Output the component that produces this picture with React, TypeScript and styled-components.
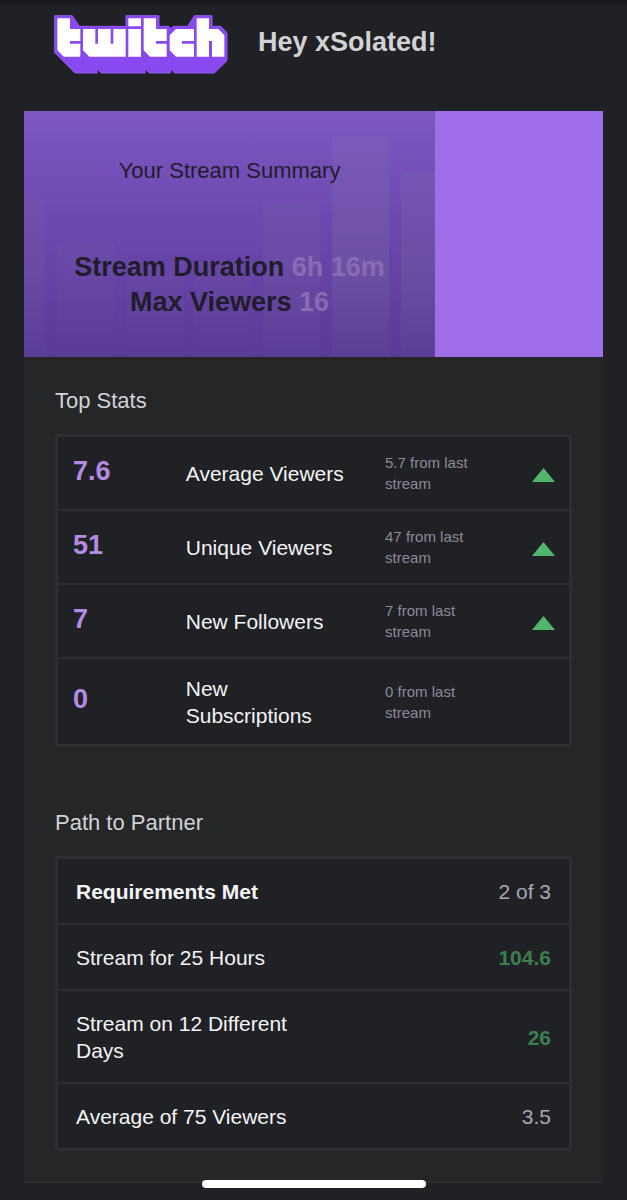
import React from "react";
import styled, { createGlobalStyle } from "styled-components";

const colors = {
  page: "#202125",
  card: "#252628",
  line: "#2e2f32",
  heading: "#d2d2d4",
  text: "#f4f4f6",
  muted: "#8c8a99",
  soft: "#a9a7b6",
  accent: "#b48be4",
  up: "#52b66c",
  met: "#3c7f4e",
};

const GlobalStyle = createGlobalStyle`
  *, *::before, *::after { box-sizing: border-box; }
  html, body { margin: 0; background: ${colors.page}; }
  body {
    color: ${colors.text};
    font-family: "Liberation Sans", Arial, Helvetica, sans-serif;
    font-size: 21px;
    line-height: 27px;
  }
`;

const Page = styled.div`
  min-height: 100vh;
  padding: 0 24px 16px;
  background: linear-gradient(#17181a, ${colors.page} 6px);
`;

const Header = styled.header`
  display: flex;
  align-items: center;
  gap: 30px;
  padding: 15px 30px 37px;
`;

const LogoMark = styled.svg`
  display: block;
  flex: none;
  width: 174px;
  height: 59px;
`;

const Greeting = styled.h1`
  margin: 0;
  padding-bottom: 6px;
  color: ${colors.heading};
  font-size: 27px;
  line-height: 32px;
`;

const Card = styled.main`
  background: ${colors.card};
  border-bottom: 2px solid ${colors.line};
`;

const Hero = styled.section`
  display: flex;
  background: #9f6ee8;
`;

const Summary = styled.div`
  position: relative;
  flex: 0 0 71%;
  padding: 46px 12px 37px;
  background: linear-gradient(#7e57c3, #6a47ac 50%, #593b96);
  color: #211c2b;
  text-align: center;
`;

const HeroBars = styled.svg`
  position: absolute;
  inset: 0;
  width: 100%;
  height: 100%;
`;

const SummaryTitle = styled.h2`
  position: relative;
  margin: 0 0 65px;
  font-size: 22px;
  font-weight: 400;
  line-height: 28px;
`;

const SummaryLine = styled.p`
  position: relative;
  margin: 0;
  font-size: 27px;
  font-weight: 700;
  line-height: 35px;
`;

const SummaryValue = styled.span`
  color: #876cb4;
`;

const Sections = styled.div`
  display: flex;
  flex-direction: column;
  gap: 62px;
  padding: 30px 31px;
`;

const SectionTitle = styled.h2`
  margin: 0 0 19px;
  color: ${colors.heading};
  font-size: 22px;
  font-weight: 400;
  line-height: 28px;
`;

const Panel = styled.div`
  border: 3px solid ${colors.line};
  border-radius: 3px;
  background: ${colors.page};
`;

const Table = styled.table`
  width: 100%;
  table-layout: fixed;
  border-collapse: separate;
  border-spacing: 0;
`;

const Column = styled.col<{ $width: string }>`
  width: ${(p) => p.$width};
`;

const Row = styled.tr`
  &:not(:last-child) > * {
    border-bottom: 2px solid ${colors.line};
  }
`;

const StatValue = styled.td`
  padding: 16px 0 21px 15px;
  color: ${colors.accent};
  font-size: 27px;
  font-weight: 700;
  line-height: 32px;
`;

const StatLabel = styled.th`
  padding: 16px 36px 15px 0;
  font-weight: 400;
  text-align: left;
`;

const StatChange = styled.td`
  padding: 15px 40px 15px 0;
  color: ${colors.muted};
  font-size: 15px;
  line-height: 21px;
`;

const StatTrend = styled.td`
  padding: 4px 14px 0 0;
  line-height: 0;
  text-align: right;
`;

const PathLabel = styled.th<{ $strong?: boolean }>`
  padding: 19px 0 18px 18px;
  font-weight: ${(p) => (p.$strong ? 700 : 400)};
  text-align: left;
`;

const PathValue = styled.td<{ $met?: boolean }>`
  padding: 19px 18px 18px 0;
  color: ${(p) => (p.$met ? colors.met : colors.soft)};
  font-weight: ${(p) => (p.$met ? 700 : 400)};
  text-align: right;
`;

const HomeIndicator = styled.div`
  position: fixed;
  bottom: 12px;
  left: 50%;
  width: 224px;
  height: 8px;
  margin-left: -112px;
  border-radius: 4px;
  background: #fff;
`;

const stats = [
  { value: "7.6", label: "Average Viewers", change: "5.7 from last stream", up: true },
  { value: "51", label: "Unique Viewers", change: "47 from last stream", up: true },
  { value: "7", label: "New Followers", change: "7 from last stream", up: true },
  { value: "0", label: "New Subscriptions", change: "0 from last stream", up: false },
];

const requirements = [
  { label: "Requirements Met", value: "2 of 3", strong: true, met: false },
  { label: "Stream for 25 Hours", value: "104.6", strong: false, met: true },
  { label: "Stream on 12 Different Days", value: "26", strong: false, met: true },
  { label: "Average of 75 Viewers", value: "3.5", strong: false, met: false },
];

const bars = [
  { x: 0, y: 87, width: 21, opacity: 0.6 },
  { x: 33, y: 131, width: 58, opacity: 0.35 },
  { x: 102, y: 150, width: 58, opacity: 0.3 },
  { x: 170, y: 150, width: 58, opacity: 0.3 },
  { x: 239, y: 92, width: 57, opacity: 0.6 },
  { x: 308, y: 25, width: 57, opacity: 1 },
  { x: 377, y: 61, width: 34, opacity: 0.8 },
];

function Logo() {
  return (
    <LogoMark viewBox="42 46 522 177" role="img" aria-label="Twitch">
      <path
        fill="#8849f0"
        stroke="#9257f2"
        strokeWidth="3"
        d="M44 48H97L118 80H258V48H357V80H386L393 87L400 80H443L463 48H516V80H542L561 99V183L523 220H404L391 207V220H328L315 207V220H184L171 207V220H105L44 159Z"
      />
      <path
        fill="#fff"
        d="M52 56H90V88H121V124H90V132H121V171H71L52 152Z M129 88H166V132H174V88H212V132H220V88H257V171H148L129 152Z M265 56H303V80H265Z M265 88H303V171H265Z M311 56H348V88H380V124H348V132H380V171H330L311 152Z M408 88H462V124H426V132H462V171H408L389 152V107Z M470 56H507V88H535L553 107V171H516V124H507V171H470Z"
      />
    </LogoMark>
  );
}

export default function App() {
  return (
    <>
      <GlobalStyle />
      <Page>
        <Header>
          <Logo />
          <Greeting>Hey xSolated!</Greeting>
        </Header>
        <Card>
          <Hero>
            <Summary>
              <HeroBars viewBox="0 0 411 246" preserveAspectRatio="none" aria-hidden="true">
                <defs>
                  <linearGradient id="barFade" gradientUnits="userSpaceOnUse" x1="0" y1="20" x2="0" y2="246">
                    <stop offset="0" stopColor="#8a8a9a" stopOpacity="0.12" />
                    <stop offset="0.6" stopColor="#8a8a9a" stopOpacity="0.18" />
                    <stop offset="1" stopColor="#8a8a9a" stopOpacity="0.04" />
                  </linearGradient>
                </defs>
                {bars.map((bar) => (
                  <rect
                    key={bar.x}
                    x={bar.x}
                    y={bar.y}
                    width={bar.width}
                    height={246 - bar.y}
                    fill="url(#barFade)"
                    opacity={bar.opacity}
                  />
                ))}
              </HeroBars>
              <SummaryTitle>Your Stream Summary</SummaryTitle>
              <SummaryLine>
                Stream Duration <SummaryValue>6h 16m</SummaryValue>
              </SummaryLine>
              <SummaryLine>
                Max Viewers <SummaryValue>16</SummaryValue>
              </SummaryLine>
            </Summary>
          </Hero>
          <Sections>
            <section>
              <SectionTitle>Top Stats</SectionTitle>
              <Panel>
                <Table aria-label="Top Stats">
                  <colgroup>
                    <Column $width="25%" />
                    <Column $width="39%" />
                    <Column $width="27%" />
                    <Column $width="9%" />
                  </colgroup>
                  <tbody>
                    {stats.map((stat) => (
                      <Row key={stat.label}>
                        <StatValue>{stat.value}</StatValue>
                        <StatLabel scope="row">{stat.label}</StatLabel>
                        <StatChange>{stat.change}</StatChange>
                        <StatTrend>
                          {stat.up && (
                            <svg width="23" height="14" viewBox="0 0 23 14" role="img" aria-label="Up">
                              <path fill={colors.up} d="M11.5 0L23 14H0Z" />
                            </svg>
                          )}
                        </StatTrend>
                      </Row>
                    ))}
                  </tbody>
                </Table>
              </Panel>
            </section>
            <section>
              <SectionTitle>Path to Partner</SectionTitle>
              <Panel>
                <Table aria-label="Path to Partner">
                  <colgroup>
                    <Column $width="55%" />
                    <Column $width="45%" />
                  </colgroup>
                  <tbody>
                    {requirements.map((item) => (
                      <Row key={item.label}>
                        <PathLabel scope="row" $strong={item.strong}>
                          {item.label}
                        </PathLabel>
                        <PathValue $met={item.met}>{item.value}</PathValue>
                      </Row>
                    ))}
                  </tbody>
                </Table>
              </Panel>
            </section>
          </Sections>
        </Card>
      </Page>
      <HomeIndicator />
    </>
  );
}
